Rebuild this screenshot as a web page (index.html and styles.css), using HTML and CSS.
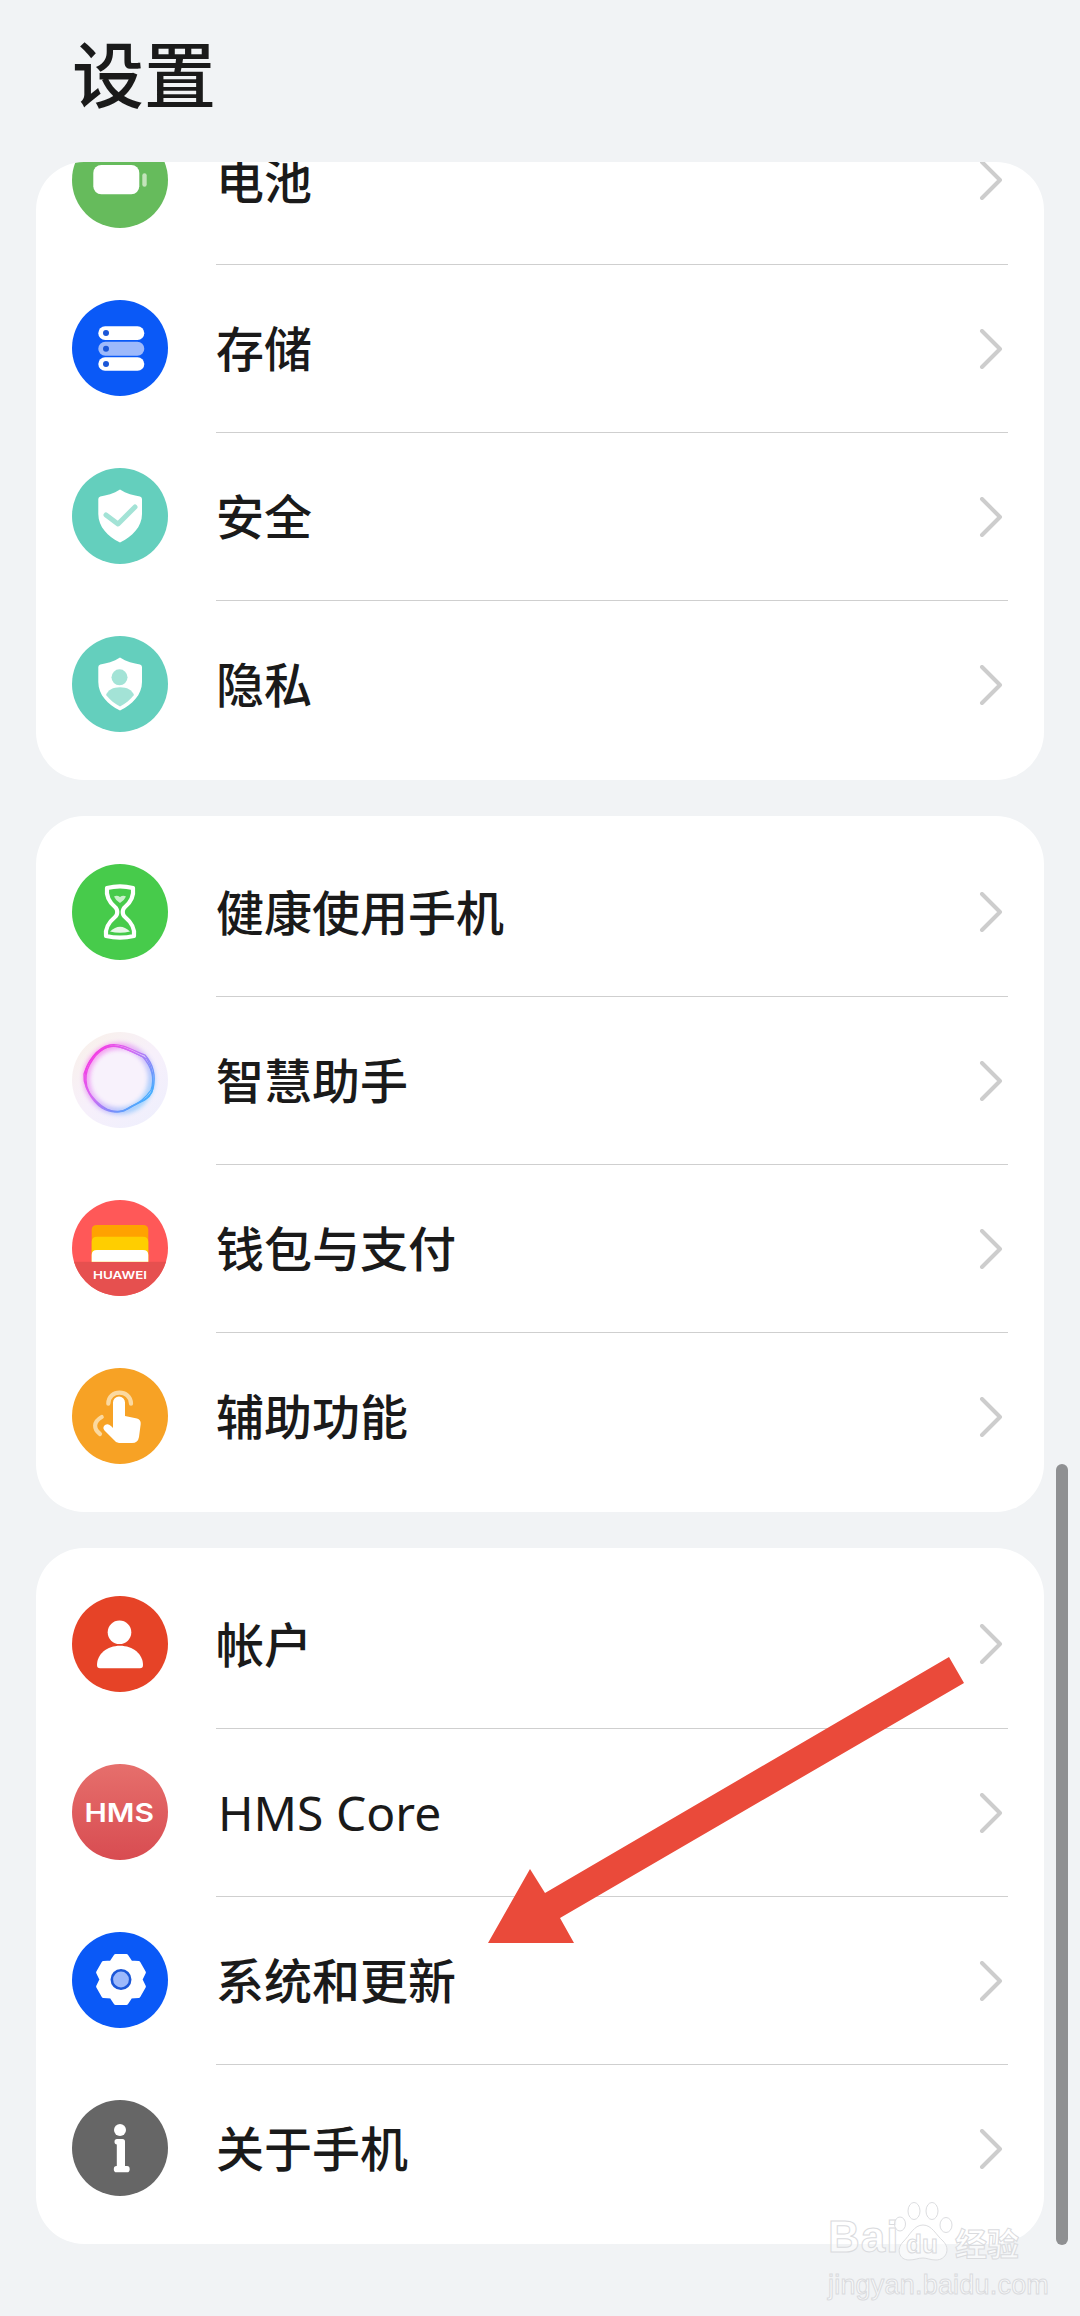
FILE: index.html
```html
<!DOCTYPE html>
<html lang="zh-CN">
<head>
<meta charset="utf-8">
<title>设置</title>
<link rel="stylesheet" href="styles.css">
</head>
<body>
<svg class="defs" width="0" height="0" aria-hidden="true">
  <defs>
    <symbol id="chev" viewBox="0 0 24 40"><path d="M3 2 L21 20 L3 38" fill="none" stroke="#cdcdcd" stroke-width="4" stroke-linecap="round" stroke-linejoin="round"/></symbol>
    <path id="shield" d="M48 21.5C54 25.5 62 27.5 68 28.5Q70 29 70 31V46C70 59 60 68.5 48.5 74.3Q48 74.5 47.5 74.3C36 68.5 26.3 59 26.3 46V31Q26.3 29 28.3 28.5C34 27.5 42 25.5 48 21.5Z" fill="#fff"/>
    <linearGradient id="hms" x1="0" y1="0" x2="0" y2="1"><stop offset="0" stop-color="#e66f6c"/><stop offset="1" stop-color="#d84c51"/></linearGradient>
    <linearGradient id="aibg" x1="0.1" y1="0" x2="0.9" y2="1"><stop offset="0" stop-color="#f9f1ea"/><stop offset="0.5" stop-color="#f7f0fb"/><stop offset="1" stop-color="#eeeffd"/></linearGradient>
    <linearGradient id="ring" x1="0.1" y1="0.1" x2="0.95" y2="0.8"><stop offset="0" stop-color="#f636e2"/><stop offset="0.4" stop-color="#d46cf4"/><stop offset="0.72" stop-color="#7d8cfa"/><stop offset="1" stop-color="#3fb2ff"/></linearGradient>
    <filter id="glow" x="-20%" y="-20%" width="140%" height="140%"><feGaussianBlur stdDeviation="2"/></filter>
  </defs>
</svg>

<header class="top"><h1 class="title">设置</h1></header>

<main class="scroller">
  <div class="list">
    <section class="card">
      <div class="row">
        <svg class="icon" viewBox="0 0 96 96"><circle cx="48" cy="48" r="48" fill="#66bb5c"/><rect x="21.3" y="33" width="46" height="29.3" rx="8" fill="#fff"/><rect x="70.3" y="41.3" width="4.4" height="13.4" rx="2.2" fill="#c3e4ba"/></svg>
        <div class="body first"><span class="label">电池</span><svg class="chev"><use href="#chev"/></svg></div>
      </div>
      <div class="row">
        <svg class="icon" viewBox="0 0 96 96"><circle cx="48" cy="48" r="48" fill="#0a59f7"/><rect x="26.3" y="26.3" width="46" height="13.7" rx="6.8" fill="#fff"/><rect x="26.3" y="41.7" width="46" height="14" rx="7" fill="#9db9fb"/><rect x="26.3" y="57.3" width="46" height="13.4" rx="6.7" fill="#fff"/><circle cx="34" cy="33" r="3" fill="#1b57d8"/><circle cx="34" cy="48.7" r="3" fill="#1b57d8"/><circle cx="34" cy="64" r="3" fill="#1b57d8"/></svg>
        <div class="body"><span class="label">存储</span><svg class="chev"><use href="#chev"/></svg></div>
      </div>
      <div class="row">
        <svg class="icon" viewBox="0 0 96 96"><circle cx="48" cy="48" r="48" fill="#64cfbd"/><use href="#shield"/><path d="M34 47 L46 56 L63 39" fill="none" stroke="#a3e3d6" stroke-width="5" stroke-linecap="round" stroke-linejoin="round"/></svg>
        <div class="body"><span class="label">安全</span><svg class="chev"><use href="#chev"/></svg></div>
      </div>
      <div class="row">
        <svg class="icon" viewBox="0 0 96 96"><circle cx="48" cy="48" r="48" fill="#64cfbd"/><use href="#shield"/><circle cx="47.5" cy="41.3" r="8" fill="#a3e3d6"/><path d="M34 59C36 54 41 51.3 48 51.3C55 51.3 60 54 62 59C58 64 53 68 48 70.5C43 68 38 64 34 59Z" fill="#a3e3d6"/></svg>
        <div class="body"><span class="label">隐私</span><svg class="chev"><use href="#chev"/></svg></div>
      </div>
    </section>

    <section class="card">
      <div class="row">
        <svg class="icon" viewBox="0 0 96 96"><circle cx="48" cy="48" r="48" fill="#47cb4b"/><path d="M35 24C43 22 53 22 61 24C62 32 59 38 53 43C50 45.5 50 50.5 53 53C59 58 63 65 62 72C53 74 43 74 34 72C33 65 37 58 43 53C46 50.5 46 45.5 43 43C37 38 34 32 35 24Z" fill="none" stroke="#fff" stroke-width="4.2" stroke-linejoin="round"/><path d="M42 32.5Q45 31 48 33Q51 31 54 32.5Q52 37 48 39Q44 37 42 32.5Z" fill="#c9f0ca"/><path d="M38 67.5Q48 58 58 67.5Q48 70 38 67.5Z" fill="#e6f8e6"/></svg>
        <div class="body first"><span class="label">健康使用手机</span><svg class="chev"><use href="#chev"/></svg></div>
      </div>
      <div class="row">
        <svg class="icon" viewBox="0 0 96 96"><circle cx="48" cy="48" r="48" fill="url(#aibg)"/><circle cx="47" cy="47" r="32" fill="#f8f2fc"/><circle cx="47" cy="46.5" r="32.5" fill="none" stroke="url(#ring)" stroke-width="7" opacity="0.45" filter="url(#glow)"/><g fill="none" stroke="url(#ring)" stroke-width="1.3"><path d="M13 44C14 30 25 16 38 13C50 11 62 19 73 23C81 32 84 44 81 57C77 68 68 69 60 74C50 81 40 82 30 76C20 69 12 56 13 44Z"/><path d="M14 48C13 34 25 19 36 15C48 12 60 20 71 25C79 34 83 46 79 58C73 67 64 73 56 77C46 82 34 79 26 72C19 65 14 56 14 48Z"/><path d="M12 42C16 28 28 14 42 14C54 15 64 22 75 27C82 38 82 50 80 60C75 71 62 71 52 79C42 82 32 77 24 69C16 61 11 52 12 42Z"/></g></svg>
        <div class="body"><span class="label">智慧助手</span><svg class="chev"><use href="#chev"/></svg></div>
      </div>
      <div class="row">
        <svg class="icon" viewBox="0 0 96 96"><circle cx="48" cy="48" r="48" fill="#ff5858"/><path d="M2 61.7H94A48 48 0 0 1 2 61.7Z" fill="#e6504f"/><path d="M19.7 61.7V30Q19.7 25 25 25H71Q76.3 25 76.3 30V61.7Z" fill="#ffa200"/><path d="M19.7 61.7V42Q19.7 36.7 25 36.7H71Q76.3 36.7 76.3 42V61.7Z" fill="#ffce00"/><path d="M19.7 61.7V55Q19.7 50 25 50H71Q76.3 50 76.3 55V61.7Z" fill="#fff"/><text class="hw" x="21" y="79.4" textLength="54" lengthAdjust="spacingAndGlyphs">HUAWEI</text></svg>
        <div class="body"><span class="label">钱包与支付</span><svg class="chev"><use href="#chev"/></svg></div>
      </div>
      <div class="row">
        <svg class="icon" viewBox="0 0 96 96"><circle cx="48" cy="48" r="48" fill="#f7a225"/><path d="M36.3 35.7C36.5 21 58.5 21 59 35.7" fill="none" stroke="#fbd9a0" stroke-width="4.2" stroke-linecap="round"/><path d="M28 66C21.5 61 21 54 29.7 49" fill="none" stroke="#fbd9a0" stroke-width="4.2" stroke-linecap="round"/><path d="M41 34.5A6 6 0 0 1 53 34.5V48L65 50.5Q69 51.5 68.7 56L67 69Q66 75 60 75H47Q44 75 42 72L32.5 62.5Q30 59.5 33 57Q36 55 39 58L41 60Z" fill="#fff"/></svg>
        <div class="body"><span class="label">辅助功能</span><svg class="chev"><use href="#chev"/></svg></div>
      </div>
    </section>

    <section class="card">
      <div class="row">
        <svg class="icon" viewBox="0 0 96 96"><circle cx="48" cy="48" r="48" fill="#e64327"/><circle cx="47.5" cy="36.3" r="11.8" fill="#fff"/><path d="M28 72.3Q25 72.3 25 69C25 58 35 49.7 48 49.7C61 49.7 71 58 71 69Q71 72.3 68 72.3Z" fill="#fff"/></svg>
        <div class="body first"><span class="label">帐户</span><svg class="chev"><use href="#chev"/></svg></div>
      </div>
      <div class="row">
        <svg class="icon" viewBox="0 0 96 96"><circle cx="48" cy="48" r="48" fill="url(#hms)"/><text class="hms" x="12.5" y="58.3" textLength="69.5" lengthAdjust="spacingAndGlyphs">HMS</text></svg>
        <div class="body"><span class="label latin">HMS Core</span><svg class="chev"><use href="#chev"/></svg></div>
      </div>
      <div class="row">
        <svg class="icon" viewBox="0 0 96 96"><circle cx="48" cy="48" r="48" fill="#0a59f7"/><polygon points="43.6,24.1 54.4,24.1 58.75,30.6 66.5,31.1 71.9,40.5 68.5,47.5 71.9,54.5 66.5,63.9 58.75,64.4 54.4,70.9 43.6,70.9 39.25,64.4 31.5,63.9 26.1,54.5 29.5,47.5 26.1,40.5 31.5,31.1 39.25,30.6" fill="#fff" stroke="#fff" stroke-width="4" stroke-linejoin="round"/><circle cx="49" cy="47.5" r="9.2" fill="#9db9fb" stroke="#1b57d8" stroke-width="2.6"/></svg>
        <div class="body"><span class="label">系统和更新</span><svg class="chev"><use href="#chev"/></svg></div>
      </div>
      <div class="row">
        <svg class="icon" viewBox="0 0 96 96"><circle cx="48" cy="48" r="48" fill="#666"/><circle cx="48" cy="30" r="6" fill="#fff"/><path d="M45 39H50.5Q53 39 53 41.5V66H55Q57.7 66 57.7 69.2Q57.7 72.3 55 72.3H44.5Q41.8 72.3 41.8 69.2Q41.8 66 44.5 66H44.8V44.4H45Q42.5 44.4 42.5 41.7Q42.5 39 45 39Z" fill="#fff"/></svg>
        <div class="body"><span class="label">关于手机</span><svg class="chev"><use href="#chev"/></svg></div>
      </div>
    </section>
  </div>
</main>

<div class="scrollbar"></div>

<svg class="arrow" viewBox="0 0 1080 2316"><polygon points="949,1657 964,1683 560,1918 574,1943 488,1943 530,1869 545,1893" fill="#ea4a3a"/></svg>

<div class="mark">
  <div class="mark-top">
    <span class="mark-bai">Bai</span>
    <span class="paw">
      <svg class="paw-art" viewBox="0 0 60 60"><g fill="rgba(255,255,255,.5)" stroke="#dcdde0" stroke-width="1"><ellipse cx="6" cy="22" rx="5.5" ry="7"/><ellipse cx="20" cy="9" rx="6" ry="8.5"/><ellipse cx="38" cy="9" rx="6" ry="8.5"/><ellipse cx="52" cy="23" rx="6" ry="7.5"/><path d="M29 23C38 23 42 33 49 39C57 47 52 58 42 58C36 58 33 56 29 56C24 56 21 58 15 58C5 58 2 47 9 40C16 33 20 23 29 23Z"/></g></svg>
      <span class="mark-du">du</span>
    </span>
    <span class="mark-cn">经验</span>
  </div>
  <div class="mark-url">jingyan.baidu.com</div>
</div>
</body>
</html>
```
FILE: styles.css
```css
* { box-sizing: border-box; }
html, body { margin: 0; padding: 0; }
body {
  position: relative;
  width: 1080px;
  height: 2316px;
  overflow: hidden;
  background: #f1f3f5;
  color: #1a1a1a;
  font-family: "Noto Sans", "Noto Sans CJK SC", sans-serif;
}
.defs { position: absolute; }
.top { height: 162px; padding: 33px 0 0 72px; }
.title {
  margin: 0;
  font-family: "Noto Sans CJK SC", sans-serif;
  font-size: 72px;
  line-height: 76px;
  font-weight: 500;
  color: #1a1a1a;
}
.scroller {
  height: 2154px;
  margin: 0 36px;
  overflow: hidden;
  border-radius: 48px 48px 0 0;
}
.list {
  display: flex;
  flex-direction: column;
  gap: 36px;
  margin-top: -78px;
}
.card {
  background: #fff;
  border-radius: 48px;
  padding: 12px 0;
}
.row {
  display: flex;
  align-items: center;
  height: 168px;
  padding: 0 36px;
  gap: 48px;
}
.icon { width: 96px; height: 96px; flex: none; }
.body {
  flex: 1;
  align-self: stretch;
  display: flex;
  align-items: center;
  justify-content: space-between;
  padding-right: 5px;
  border-top: 1px solid #cfcfcf;
}
.body.first { border-top: none; }
.label {
  font-family: "Noto Sans CJK SC", sans-serif;
  font-size: 48px;
  line-height: 60px;
  font-weight: 500;
  color: #1a1a1a;
  padding-bottom: 5px;
}
.label.latin { font-family: "Noto Sans", sans-serif; font-weight: 400; padding-bottom: 0; margin-left: 2px; }
.chev { width: 24px; height: 40px; flex: none; }
.hw { font-family: "Inter", sans-serif; font-size: 10.4px; font-weight: 600; fill: #fff; }
.hms { font-family: "Inter", sans-serif; font-size: 26px; font-weight: 600; fill: #fff; }
.scrollbar {
  position: absolute;
  left: 1056px;
  top: 1464px;
  width: 12px;
  height: 781px;
  border-radius: 6px;
  background: #8f9092;
}
.arrow { position: absolute; left: 0; top: 0; width: 1080px; height: 2316px; pointer-events: none; }
.mark {
  position: absolute;
  left: 828px;
  top: 2202px;
  width: 196px;
  color: rgba(255, 255, 255, .55);
  -webkit-text-stroke: 1px #dadbde;
}
.mark-top { display: flex; align-items: flex-end; height: 60px; }
.mark-bai { font-family: "Liberation Sans", sans-serif; font-weight: 700; font-size: 44px; line-height: 50px; letter-spacing: 1px; width: 66px; }
.paw { position: relative; width: 60px; height: 60px; flex: none; }
.paw-art { width: 60px; height: 60px; display: block; }
.mark-du { position: absolute; left: 12px; bottom: 3px; font-family: "Liberation Sans", sans-serif; font-weight: 700; font-size: 26px; line-height: 30px; }
.mark-cn { font-family: "Noto Sans CJK SC", sans-serif; font-weight: 700; font-size: 32px; line-height: 40px; margin-left: 1px; }
.mark-url { font-family: "Liberation Sans", sans-serif; font-size: 27px; line-height: 30px; margin-top: 8px; letter-spacing: .2px; white-space: nowrap; }
```
